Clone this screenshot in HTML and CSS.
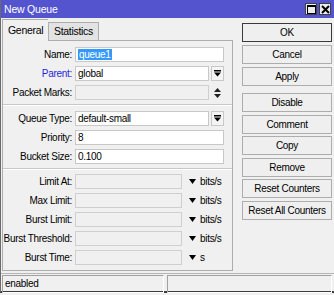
FILE: index.html
```html
<!DOCTYPE html>
<html>
<head>
<meta charset="utf-8">
<link rel="stylesheet" href="styles.css">
</head>
<body>
<div class="window">
  <div class="titlebar">
    <span class="title">New Queue</span>
    <div class="tbtns">
      <span class="tbtn"><svg width="9" height="9" viewBox="0 0 9 9"><rect x="0.5" y="0.5" width="8" height="8" fill="none" stroke="#000"/><rect x="0" y="0" width="9" height="2" fill="#000"/></svg></span>
      <span class="tbtn"><svg width="9" height="9" viewBox="0 0 9 9"><path d="M1 1L8 8M8 1L1 8" stroke="#000" stroke-width="2"/></svg></span>
    </div>
  </div>
  <div class="content">
    <div class="left">
      <div class="tabs">
        <div class="tab active">General</div>
        <div class="tab">Statistics</div>
      </div>
      <div class="panel">
        <div class="row"><label>Name:</label><div class="field"><span class="sel">queue1</span></div></div>
        <div class="row"><label class="blue">Parent:</label><div class="field short">global</div><span class="ddbtn"><svg width="7" height="7" viewBox="0 0 7 7"><rect x="0" y="0" width="7" height="1.5" fill="#000"/><path d="M0 2.5H7L3.5 6.5Z" fill="#000"/></svg></span></div>
        <div class="row"><label>Packet Marks:</label><div class="field short dis"></div><span class="updown"><svg width="7" height="10" viewBox="0 0 7 10"><path d="M3.5 0L7 4H0Z M0 6H7L3.5 10Z" fill="#222"/></svg></span></div>
        <div class="sep"></div>
        <div class="row"><label>Queue Type:</label><div class="field short">default-small</div><span class="ddbtn"><svg width="7" height="7" viewBox="0 0 7 7"><rect x="0" y="0" width="7" height="1.5" fill="#000"/><path d="M0 2.5H7L3.5 6.5Z" fill="#000"/></svg></span></div>
        <div class="row"><label>Priority:</label><div class="field">8</div></div>
        <div class="row"><label>Bucket Size:</label><div class="field">0.100</div></div>
        <div class="sep sep2"></div>
        <div class="row"><label>Limit At:</label><div class="field lim dis"></div><span class="arr"><svg width="7" height="5" viewBox="0 0 7 5"><path d="M0 0H7L3.5 5Z" fill="#000"/></svg></span><span class="unit">bits/s</span></div>
        <div class="row"><label>Max Limit:</label><div class="field lim dis"></div><span class="arr"><svg width="7" height="5" viewBox="0 0 7 5"><path d="M0 0H7L3.5 5Z" fill="#000"/></svg></span><span class="unit">bits/s</span></div>
        <div class="row"><label>Burst Limit:</label><div class="field lim dis"></div><span class="arr"><svg width="7" height="5" viewBox="0 0 7 5"><path d="M0 0H7L3.5 5Z" fill="#000"/></svg></span><span class="unit">bits/s</span></div>
        <div class="row"><label>Burst Threshold:</label><div class="field lim dis"></div><span class="arr"><svg width="7" height="5" viewBox="0 0 7 5"><path d="M0 0H7L3.5 5Z" fill="#000"/></svg></span><span class="unit">bits/s</span></div>
        <div class="row"><label>Burst Time:</label><div class="field lim dis"></div><span class="arr"><svg width="7" height="5" viewBox="0 0 7 5"><path d="M0 0H7L3.5 5Z" fill="#000"/></svg></span><span class="unit">s</span></div>
      </div>
    </div>
    <div class="right">
      <div class="btn ok">OK</div>
      <div class="btn">Cancel</div>
      <div class="btn">Apply</div>
      <div class="btn gap">Disable</div>
      <div class="btn">Comment</div>
      <div class="btn">Copy</div>
      <div class="btn">Remove</div>
      <div class="btn">Reset Counters</div>
      <div class="btn">Reset All Counters</div>
    </div>
  </div>
  <div class="status">
    <div class="sfield first">enabled</div>
    <div class="sfield second"></div>
  </div>
</div>
</body>
</html>
```

FILE: styles.css
```css
html, body {
  margin: 0;
  padding: 0;
}
body {
  width: 334px;
  height: 295px;
  overflow: hidden;
  background: #f0f0f0;
  font-family: "Liberation Sans", Arial, sans-serif;
  font-size: 10px;
  letter-spacing: -0.3px;
  color: #000;
}
.window {
  height: 293px;
  border-left: 1px solid #6a6a6a;
  border-bottom: 2px solid #3c3c3c;
  display: flex;
  flex-direction: column;
  box-sizing: border-box;
  width: 334px;
}
.titlebar {
  height: 18px;
  background: #5454cf;
  display: flex;
  align-items: center;
  justify-content: space-between;
  color: #fff;
  padding-left: 3px;
  flex: none;
}
.title {
  font-size: 10.5px;
  letter-spacing: -0.2px;
}
.tbtns {
  display: flex;
  gap: 2px;
  margin-right: 3px;
}
.tbtn {
  width: 12px;
  height: 12px;
  box-sizing: border-box;
  background: #ececec;
  border: 1px solid #404040;
  display: flex;
  align-items: center;
  justify-content: center;
}
.content {
  display: flex;
  padding: 1px 0 0 1px;
  flex: none;
  height: 252px;
}
.left {
  width: 231px;
  display: flex;
  flex-direction: column;
}
.tabs {
  display: flex;
  align-items: flex-end;
  height: 21px;
  flex: none;
}
.tab {
  box-sizing: border-box;
  border: 1px solid #adadad;
  border-bottom: none;
  padding: 0 5px;
  height: 18px;
  line-height: 17px;
  background: #e3e3e3;
  font-size: 10.5px;
}
.tab.active {
  height: 22px;
  line-height: 20px;
  width: 46px;
  background: #f0f0f0;
  position: relative;
  z-index: 1;
  margin-bottom: -1px;
  padding: 0 5px;
  border-right: none;
}
.panel {
  border: 1px solid #adadad;
  height: 231px;
  box-sizing: border-box;
  padding: 6px 0 0 0;
}
.row {
  display: flex;
  align-items: center;
  height: 15px;
  margin-bottom: 4px;
}
.row label {
  width: 72px;
  padding-right: 3px;
  box-sizing: border-box;
  flex: none;
  display: flex;
  justify-content: flex-end;
  white-space: nowrap;
}
.blue {
  color: #2626d9;
}
.field {
  box-sizing: border-box;
  width: 149px;
  height: 15px;
  background: #fff;
  border: 1px solid #c8c8c8;
  line-height: 13px;
  padding-left: 2px;
  flex: none;
  white-space: nowrap;
}
.field.short {
  width: 134px;
}
.field.lim {
  width: 107px;
}
.field.dis {
  background: #f0f0f0;
  border-color: #cfcfcf;
}
.sel {
  background: #3399ff;
  color: #fff;
  padding: 0 1px;
}
.ddbtn {
  box-sizing: border-box;
  width: 13px;
  height: 15px;
  margin-left: 2px;
  border: 1px solid #c8c8c8;
  background: #f4f4f4;
  display: flex;
  align-items: center;
  justify-content: center;
}
.updown {
  width: 13px;
  margin-left: 2px;
  display: flex;
  justify-content: center;
}
.arr {
  margin-left: 7px;
  display: flex;
  align-items: center;
}
.unit {
  margin-left: 4px;
}
.sep {
  height: 0;
  border-top: 1px solid #c8c8c8;
  border-bottom: 1px solid #fff;
  margin: 1px 0 5px 0;
}
.sep2 {
  margin: 2px 0 4px 0;
}
.right {
  margin-left: 9px;
  width: 90px;
  display: flex;
  flex-direction: column;
  padding-top: 4px;
}
.btn {
  box-sizing: border-box;
  height: 19px;
  border: 1px solid #adadad;
  background: #efefef;
  text-align: center;
  line-height: 17px;
  margin-bottom: 2.5px;
  white-space: nowrap;
}
.btn.ok {
  border: 1px solid #3a3a3a;
  margin-bottom: 3px;
}
.btn.gap {
  margin-top: 5px;
}
.status {
  margin-top: 2px;
  border-top: 1px solid #b5b5b5;
  display: flex;
  gap: 3px;
  padding: 1px 2px 0 1px;
  flex: 1;
}
.sfield {
  box-sizing: border-box;
  height: 18px;
  border-top: 1px solid #a0a0a0;
  border-left: 1px solid #a0a0a0;
  border-right: 1px solid #fff;
  border-bottom: 1px solid #fff;
  line-height: 16px;
  padding-left: 2px;
}
.first {
  width: 162px;
}
.second {
  flex: 1;
}
```
